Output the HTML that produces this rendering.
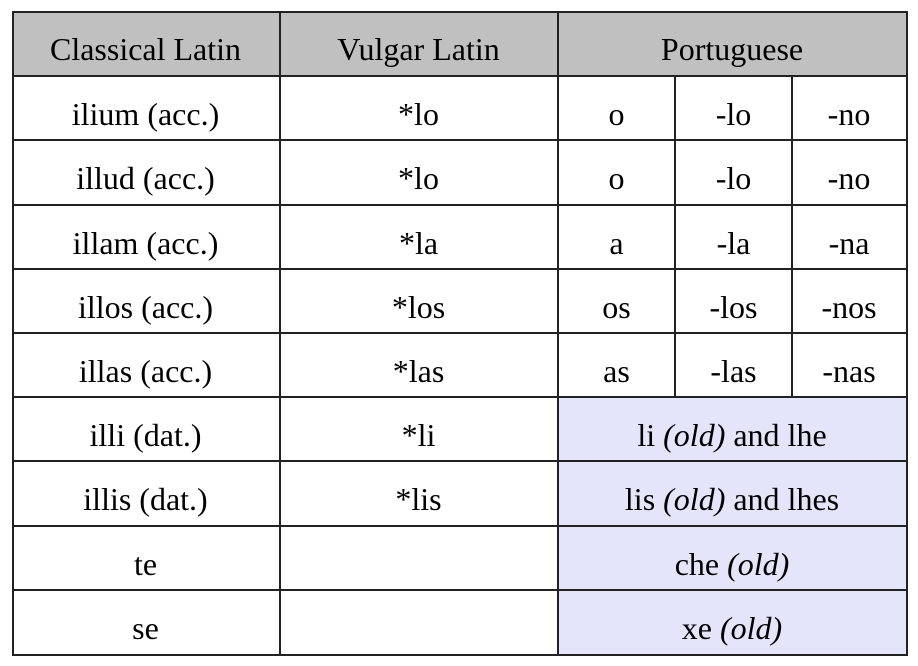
<!DOCTYPE html>
<html><head><style>
body{margin:0;width:918px;height:666px;background:#fff;position:relative;font-family:"Liberation Serif","Times New Roman",Times,serif;font-size:32px;color:#000}
.c{position:absolute;display:flex;align-items:center;justify-content:center;padding-top:12px;box-sizing:border-box;white-space:nowrap}
.h{position:absolute;background:#222;height:2px}
.v{position:absolute;background:#222;width:2px}
i{font-style:italic}
</style></head><body>
<div style="position:absolute;left:12px;top:11px;width:894px;height:65px;background:#c0c0c0"></div>
<div style="position:absolute;left:558px;top:397px;width:348px;height:258px;background:#e4e4fb"></div>

<div class="c" style="left:12px;top:11px;width:267px;height:65px">Classical Latin</div>
<div class="c" style="left:279px;top:11px;width:279px;height:65px">Vulgar Latin</div>
<div class="c" style="left:558px;top:11px;width:348px;height:65px">Portuguese</div>

<div class="c" style="left:12px;top:76px;width:267px;height:64px">ilium (acc.)</div>
<div class="c" style="left:279px;top:76px;width:279px;height:64px">*lo</div>
<div class="c" style="left:558px;top:76px;width:117px;height:64px">o</div>
<div class="c" style="left:675px;top:76px;width:117px;height:64px">-lo</div>
<div class="c" style="left:792px;top:76px;width:114px;height:64px">-no</div>

<div class="c" style="left:12px;top:140px;width:267px;height:65px">illud (acc.)</div>
<div class="c" style="left:279px;top:140px;width:279px;height:65px">*lo</div>
<div class="c" style="left:558px;top:140px;width:117px;height:65px">o</div>
<div class="c" style="left:675px;top:140px;width:117px;height:65px">-lo</div>
<div class="c" style="left:792px;top:140px;width:114px;height:65px">-no</div>

<div class="c" style="left:12px;top:205px;width:267px;height:64px">illam (acc.)</div>
<div class="c" style="left:279px;top:205px;width:279px;height:64px">*la</div>
<div class="c" style="left:558px;top:205px;width:117px;height:64px">a</div>
<div class="c" style="left:675px;top:205px;width:117px;height:64px">-la</div>
<div class="c" style="left:792px;top:205px;width:114px;height:64px">-na</div>

<div class="c" style="left:12px;top:269px;width:267px;height:64px">illos (acc.)</div>
<div class="c" style="left:279px;top:269px;width:279px;height:64px">*los</div>
<div class="c" style="left:558px;top:269px;width:117px;height:64px">os</div>
<div class="c" style="left:675px;top:269px;width:117px;height:64px">-los</div>
<div class="c" style="left:792px;top:269px;width:114px;height:64px">-nos</div>

<div class="c" style="left:12px;top:333px;width:267px;height:64px">illas (acc.)</div>
<div class="c" style="left:279px;top:333px;width:279px;height:64px">*las</div>
<div class="c" style="left:558px;top:333px;width:117px;height:64px">as</div>
<div class="c" style="left:675px;top:333px;width:117px;height:64px">-las</div>
<div class="c" style="left:792px;top:333px;width:114px;height:64px">-nas</div>

<div class="c" style="left:12px;top:397px;width:267px;height:64px">illi (dat.)</div>
<div class="c" style="left:279px;top:397px;width:279px;height:64px">*li</div>
<div class="c" style="left:558px;top:397px;width:348px;height:64px">li&nbsp;<i>(old)</i>&nbsp;and lhe</div>

<div class="c" style="left:12px;top:461px;width:267px;height:65px">illis (dat.)</div>
<div class="c" style="left:279px;top:461px;width:279px;height:65px">*lis</div>
<div class="c" style="left:558px;top:461px;width:348px;height:65px">lis&nbsp;<i>(old)</i>&nbsp;and lhes</div>

<div class="c" style="left:12px;top:526px;width:267px;height:64px">te</div>
<div class="c" style="left:558px;top:526px;width:348px;height:64px">che&nbsp;<i>(old)</i></div>

<div class="c" style="left:12px;top:590px;width:267px;height:65px">se</div>
<div class="c" style="left:558px;top:590px;width:348px;height:65px">xe&nbsp;<i>(old)</i></div>

<div class="h" style="left:12px;top:11px;width:896px"></div>
<div class="h" style="left:12px;top:75px;width:896px"></div>
<div class="h" style="left:12px;top:139px;width:896px"></div>
<div class="h" style="left:12px;top:204px;width:896px"></div>
<div class="h" style="left:12px;top:268px;width:896px"></div>
<div class="h" style="left:12px;top:332px;width:896px"></div>
<div class="h" style="left:12px;top:396px;width:896px"></div>
<div class="h" style="left:12px;top:460px;width:896px"></div>
<div class="h" style="left:12px;top:525px;width:896px"></div>
<div class="h" style="left:12px;top:589px;width:896px"></div>
<div class="h" style="left:12px;top:654px;width:896px"></div>

<div class="v" style="left:12px;top:11px;height:645px"></div>
<div class="v" style="left:279px;top:11px;height:645px"></div>
<div class="v" style="left:557px;top:11px;height:645px"></div>
<div class="v" style="left:674px;top:75px;height:323px"></div>
<div class="v" style="left:791px;top:75px;height:323px"></div>
<div class="v" style="left:906px;top:11px;height:645px"></div>
</body></html>
